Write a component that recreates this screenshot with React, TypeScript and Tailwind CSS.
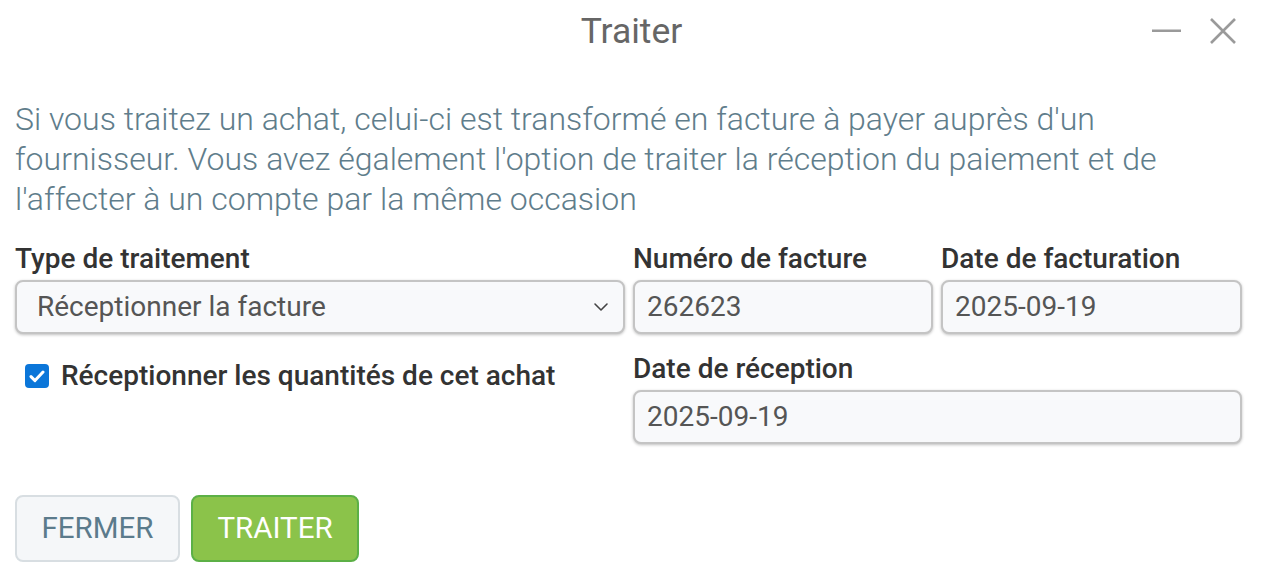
import React from "react";

function ChevronDown() {
  return (
    <svg width="16" height="10" viewBox="0 0 16 10" fill="none">
      <path d="M2 2l6 6 6-6" stroke="#444" strokeWidth="1.6" strokeLinecap="round" strokeLinejoin="round" />
    </svg>
  );
}

function Field({ label, value, select }: { label: string; value: string; select?: boolean }) {
  return (
    <div className="flex flex-col">
      <label className="text-[28px] leading-[30px] font-medium text-[#333] mb-[6px] whitespace-nowrap">{label}</label>
      <div className="h-[54px] rounded-[8px] border-2 border-[#c4c4c4] bg-[#f8f9fb] shadow-[0_1px_3px_rgba(0,0,0,0.25)] flex items-center pl-[12px] pr-[14px] text-[28px] text-[#555]">
        <span className={select ? "pl-[8px] flex-1" : "flex-1"}>{value}</span>
        {select && <ChevronDown />}
      </div>
    </div>
  );
}

export default function App() {
  return (
    <div className="w-[1263px] h-[570px] bg-white font-['Roboto',sans-serif] overflow-hidden">
      <div className="h-[62px] grid grid-cols-[1fr_auto_1fr] items-center">
        <div />
        <h1 className="text-[35.5px] text-[#666] leading-none pt-[2px]">Traiter</h1>
        <div className="flex items-center justify-end gap-[28px] pr-[26px]">
          <svg width="29" height="4" viewBox="0 0 29 4">
            <rect x="0" y="0.5" width="29" height="2.5" fill="#9a9a9a" />
          </svg>
          <svg width="28" height="28" viewBox="0 0 28 28">
            <path d="M2 2l24 24M26 2L2 26" stroke="#9a9a9a" strokeWidth="2.6" />
          </svg>
        </div>
      </div>

      <div className="pl-[15px] pr-[20px]">
        <p className="mt-[37px] text-[32px] leading-[40px] font-light text-[#607d8b] pr-[40px]">
          Si vous traitez un achat, celui-ci est transformé en facture à payer auprès d'un fournisseur. Vous avez également l'option de traiter la réception du paiement et de l'affecter à un compte par la même occasion
        </p>

        <div className="mt-[25px] grid grid-cols-[610px_300px_301px] gap-x-[8px] gap-y-[20px]">
          <Field label="Type de traitement" value="Réceptionner la facture" select />
          <Field label="Numéro de facture" value="262623" />
          <Field label="Date de facturation" value="2025-09-19" />

          <div className="pl-[10px] pt-[7px]">
            <label className="flex items-center gap-[12px] text-[28px] font-medium text-[#333] leading-[30px] whitespace-nowrap">
              <span className="w-[24px] h-[24px] rounded-[4px] bg-[#0b76d9] flex items-center justify-center shrink-0">
                <svg width="16" height="13" viewBox="0 0 16 13">
                  <path d="M2 6.6l4 4 8-8.6" stroke="white" strokeWidth="3" fill="none" strokeLinecap="round" strokeLinejoin="round" />
                </svg>
              </span>
              Réceptionner les quantités de cet achat
            </label>
          </div>
          <div className="col-span-2">
            <Field label="Date de réception" value="2025-09-19" />
          </div>
        </div>

        <div className="mt-[51px] flex gap-[11px]">
          <button className="h-[67px] w-[165px] rounded-[8px] border-2 border-[#d8dee2] bg-[#f5f7f9] text-[29.5px] text-[#5b7b8c]">
            FERMER
          </button>
          <button className="h-[67px] w-[168px] rounded-[8px] border-2 border-[#5cb046] bg-[#8bc34a] text-[29.5px] text-white">
            TRAITER
          </button>
        </div>
      </div>
    </div>
  );
}
